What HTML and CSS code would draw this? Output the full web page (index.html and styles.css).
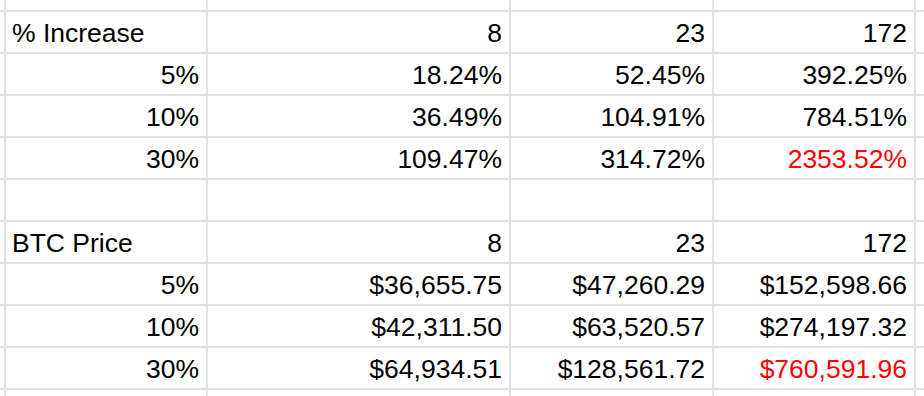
FILE: index.html
```html
<!DOCTYPE html>
<html lang="en">
<head>
  <meta charset="UTF-8">
  <meta name="viewport" content="width=device-width, initial-scale=1.0">
  <title>BTC Projection</title>
  <link rel="stylesheet" href="styles.css">
</head>
<body>
  <div class="sheet">
    <!-- partial row above -->
    <div class="row">
      <div class="cell"></div><div class="cell"></div><div class="cell"></div><div class="cell"></div><div class="cell"></div><div class="cell"></div>
    </div>

    <div class="row">
      <div class="cell"></div>
      <div class="cell label">% Increase</div>
      <div class="cell num">8</div>
      <div class="cell num">23</div>
      <div class="cell num">172</div>
      <div class="cell"></div>
    </div>
    <div class="row">
      <div class="cell"></div>
      <div class="cell num">5%</div>
      <div class="cell num">18.24%</div>
      <div class="cell num">52.45%</div>
      <div class="cell num">392.25%</div>
      <div class="cell"></div>
    </div>
    <div class="row">
      <div class="cell"></div>
      <div class="cell num">10%</div>
      <div class="cell num">36.49%</div>
      <div class="cell num">104.91%</div>
      <div class="cell num">784.51%</div>
      <div class="cell"></div>
    </div>
    <div class="row">
      <div class="cell"></div>
      <div class="cell num">30%</div>
      <div class="cell num">109.47%</div>
      <div class="cell num">314.72%</div>
      <div class="cell num alert">2353.52%</div>
      <div class="cell"></div>
    </div>

    <div class="row">
      <div class="cell"></div><div class="cell"></div><div class="cell"></div><div class="cell"></div><div class="cell"></div><div class="cell"></div>
    </div>

    <div class="row">
      <div class="cell"></div>
      <div class="cell label">BTC Price</div>
      <div class="cell num">8</div>
      <div class="cell num">23</div>
      <div class="cell num">172</div>
      <div class="cell"></div>
    </div>
    <div class="row">
      <div class="cell"></div>
      <div class="cell num">5%</div>
      <div class="cell num">$36,655.75</div>
      <div class="cell num">$47,260.29</div>
      <div class="cell num">$152,598.66</div>
      <div class="cell"></div>
    </div>
    <div class="row">
      <div class="cell"></div>
      <div class="cell num">10%</div>
      <div class="cell num">$42,311.50</div>
      <div class="cell num">$63,520.57</div>
      <div class="cell num">$274,197.32</div>
      <div class="cell"></div>
    </div>
    <div class="row">
      <div class="cell"></div>
      <div class="cell num">30%</div>
      <div class="cell num">$64,934.51</div>
      <div class="cell num">$128,561.72</div>
      <div class="cell num alert">$760,591.96</div>
      <div class="cell"></div>
    </div>

    <!-- partial row below -->
    <div class="row">
      <div class="cell"></div><div class="cell"></div><div class="cell"></div><div class="cell"></div><div class="cell"></div><div class="cell"></div>
    </div>
  </div>
</body>
</html>
```

FILE: styles.css
```css
html, body {
  margin: 0;
  height: 100%;
  overflow: hidden;
  background: #fff;
}

.sheet {
  display: grid;
  grid-template-columns: 4px 200px 301px 201px 200px 1fr;
  grid-template-rows: 10px repeat(9, 40px) 1fr;
  gap: 2px;
  height: 396px;
  background-color: #e2e2e2;
  font-family: "Liberation Sans", Arial, sans-serif;
  font-size: 26.5px;
  color: #000;
}

.row {
  display: contents;
}

.cell {
  background-color: #fff;
  display: flex;
  align-items: flex-end;
  padding: 0 7px 3px 6px;
  white-space: nowrap;
  overflow: hidden;
  min-width: 0;
}

.row:first-child .cell,
.row:last-child .cell,
.cell:first-child,
.cell:last-child {
  padding: 0;
}

.num {
  justify-content: flex-end;
}

.label {
  justify-content: flex-start;
}

.alert {
  color: #ff0000;
}
```
